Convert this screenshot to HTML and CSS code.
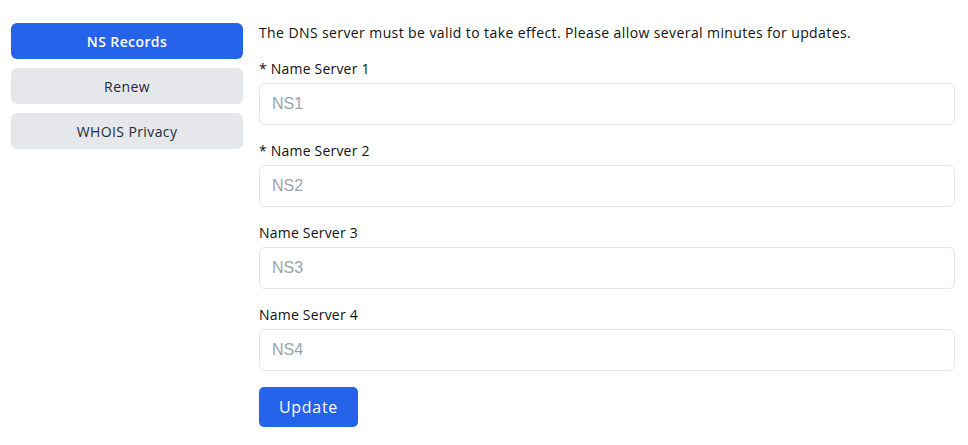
FILE: index.html
```html
<!DOCTYPE html>
<html lang="en">
<head>
  <meta charset="UTF-8" />
  <meta name="viewport" content="width=device-width, initial-scale=1.0"/>
  <title>Domain Settings</title>
  <link rel="stylesheet" href="styles.css">
</head>
<body>
  <div class="layout">
    <nav class="tabs">
      <button class="tab active">NS Records</button>
      <button class="tab">Renew</button>
      <button class="tab">WHOIS Privacy</button>
    </nav>

    <form class="panel">
      <p class="notice">The DNS server must be valid to take effect. Please allow several minutes for updates.</p>

      <div class="field">
        <label>* Name Server 1</label>
        <input type="text" placeholder="NS1"/>
      </div>
      <div class="field">
        <label>* Name Server 2</label>
        <input type="text" placeholder="NS2"/>
      </div>
      <div class="field">
        <label>Name Server 3</label>
        <input type="text" placeholder="NS3"/>
      </div>
      <div class="field">
        <label>Name Server 4</label>
        <input type="text" placeholder="NS4"/>
      </div>

      <button type="submit" class="submit">Update</button>
    </form>
  </div>
</body>
</html>
```

FILE: styles.css
```css
body {
  margin: 0;
  font-family: "Open Sans", sans-serif;
  color: #111111;
  background: white;
}

.layout {
  display: flex;
  gap: 16px;
  padding: 23px 13px 0 11px;
}

.tabs {
  width: 232px;
  flex-shrink: 0;
  display: flex;
  flex-direction: column;
  gap: 9px;
}

.tab {
  height: 36px;
  border: none;
  border-radius: 6px;
  background: #e5e7eb;
  color: #1f2937;
  font-family: inherit;
  font-size: 14px;
  font-weight: 500;
  letter-spacing: 0.4px;
  cursor: pointer;
}

.tab.active {
  background: #2563eb;
  color: white;
  font-weight: 600;
}

.panel {
  flex: 1;
  display: flex;
  flex-direction: column;
  align-items: flex-start;
}

.notice {
  margin: 0 0 16px;
  font-size: 14px;
  line-height: 20px;
  letter-spacing: 0.4px;
}

.field {
  width: 100%;
  display: flex;
  flex-direction: column;
  gap: 4px;
  margin-bottom: 16px;
}

.field label {
  font-size: 14px;
  font-weight: 500;
  line-height: 20px;
  letter-spacing: 0.2px;
}

.field input {
  height: 42px;
  box-sizing: border-box;
  border: 1px solid #e5e7eb;
  border-radius: 6px;
  padding: 0 12px;
  font-family: "Liberation Sans", Arial, sans-serif;
  font-size: 16px;
  outline: none;
}

.field input::placeholder {
  color: #9ca3af;
}

.submit {
  width: 99px;
  height: 40px;
  border: none;
  border-radius: 5px;
  background: #2563eb;
  color: white;
  font-family: inherit;
  font-size: 16px;
  font-weight: 500;
  letter-spacing: 0.7px;
  cursor: pointer;
}
```
